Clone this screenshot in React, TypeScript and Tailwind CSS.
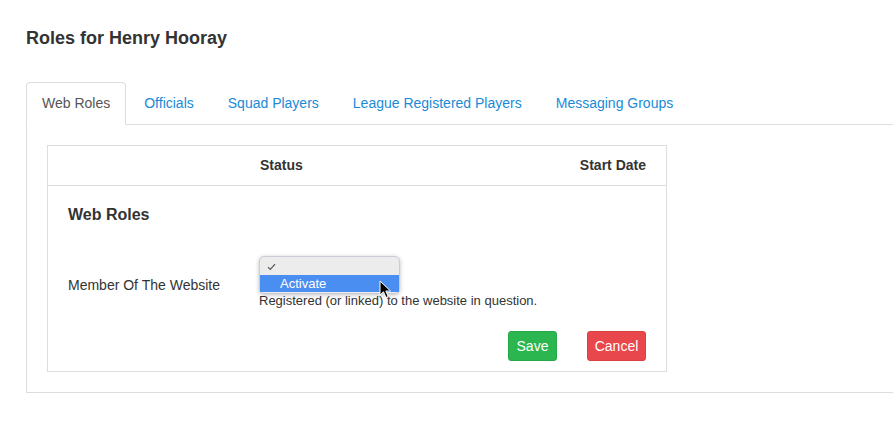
import React from 'react';

const tabs = ['Web Roles', 'Officials', 'Squad Players', 'League Registered Players', 'Messaging Groups'];

const Cursor = () => (
  <svg width="13" height="19" viewBox="0 0 13 19" className="absolute left-[119px] top-[23px]">
    <path d="M1 1 L1 15 L4.5 11.8 L7 17.5 L9.2 16.5 L6.8 11 L11.5 11 Z" fill="#000" stroke="#fff" strokeWidth="1" strokeLinejoin="round" />
  </svg>
);

const DropdownPopup = () => (
  <div className="absolute left-0 -top-px z-10 w-[141px] h-[38px] rounded-[5px] border border-[#c9ced6] bg-[#ececec] shadow-[0_1px_4px_rgba(0,0,0,0.25)] overflow-visible">
    <div className="h-[18px] flex items-center pl-[7px] pt-[2px]">
      <svg width="9" height="8" viewBox="0 0 9 8">
        <path d="M1 4.2 L3.3 6.5 L8 1.2" fill="none" stroke="#555" strokeWidth="1.2" />
      </svg>
    </div>
    <div className="h-[17px] bg-[#4b8ef1] text-white text-[13px] leading-[17px] pl-[20px]">Activate</div>
    <Cursor />
  </div>
);

const App = () => {
  return (
    <div className="bg-white h-[439px] overflow-hidden text-[#333] font-['Liberation_Sans',Arial,sans-serif]">
      <h1 className="pl-[26px] pt-[27px] text-[18px] leading-[22px] font-bold text-[#333]">Roles for Henry Hooray</h1>

      <div className="pl-[26px] mt-[33px]">
        <div className="flex border-b border-[#ddd]">
          {tabs.map((t, i) =>
            i === 0 ? (
              <div key={t} className="mr-[2px] -mb-px px-[15px] py-[10px] text-[14px] leading-[20px] border border-[#ddd] border-b-white rounded-t-[4px] bg-white text-[#555]">
                {t}
              </div>
            ) : (
              <div key={t} className="mr-[2px] px-[15px] py-[10px] text-[14px] leading-[20px] border border-transparent text-[#1a8ad6] whitespace-nowrap">
                {t}
              </div>
            )
          )}
        </div>

        <div className="border-l border-b border-[#ddd] p-5">
          <div className="w-[620px] border border-[#ddd]">
            <div className="flex items-center h-[40px] border-b border-[#ddd] text-[14px] font-bold">
              <div className="w-[212px]" />
              <div className="flex-1">Status</div>
              <div className="pr-5">Start Date</div>
            </div>

            <div className="px-5 pt-[18px] pb-[10px]">
              <h3 className="text-[16px] leading-[22px] font-bold">Web Roles</h3>

              <div className="flex items-start mt-[31px]">
                <div className="w-[191px] mt-[18px] text-[14px] leading-[20px]">Member Of The Website</div>
                <div className="relative">
                  <div className="h-[34px]" />
                  <DropdownPopup />
                  <p className="text-[13px] leading-[20px] text-[#333]">Registered (or linked) to the website in question.</p>
                </div>
              </div>

              <div className="flex justify-end gap-[30px] mt-[20px]">
                <button className="w-[49px] h-[30px] rounded-[3px] bg-[#2bb64f] border border-[#27a848] text-white text-[14px]">Save</button>
                <button className="w-[59px] h-[30px] rounded-[3px] bg-[#e8474b] border border-[#d9403f] text-white text-[14px]">Cancel</button>
              </div>
            </div>
          </div>
        </div>
      </div>
    </div>
  );
};

export default App;
